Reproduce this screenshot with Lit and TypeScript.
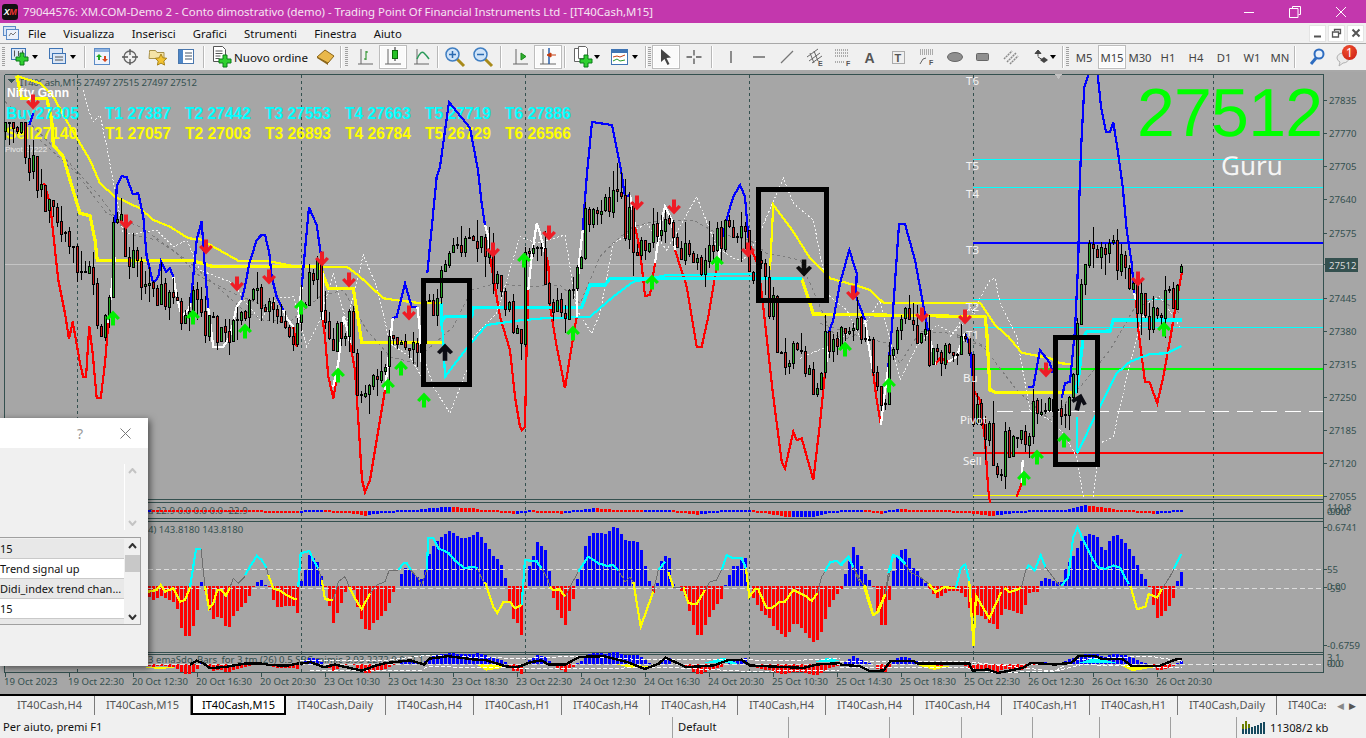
import { LitElement, html, css, svg } from "lit";
import { customElement } from "lit/decorators.js";

type N = number[];
const Z = (ox: number, oy: number, s: number, a: N) => {
  const out: string[] = [];
  for (let i = 0; i < a.length; i += 2) out.push(`${(ox + a[i] / s).toFixed(1)},${(oy + a[i + 1] / s).toFixed(1)}`);
  return out.join(" ");
};
const z9 = (a: N) => Z(0, 70, 3, a);
const z8 = (a: N) => Z(400, 170, 3, a);
const z7 = (a: N) => Z(950, 230, 3, a);
const z12 = (a: N) => Z(740, 290, 3, a);
const z3 = (a: N) => Z(906, 0, 3, a);
const z10 = (a: N) => Z(140, 500, 3, a);
const z11 = (a: N) => Z(520, 500, 3, a);
const z6 = (a: N) => Z(840, 490, 2.98, a);
const z5 = (a: N) => Z(300, 650, 2.9, a);
const r = (a: N) => Z(0, 0, 1, a);

const BLUE = [
  z9([88, 165, 100, 130]),
  z9([346, 460, 350, 350, 365, 318, 380, 322, 398, 372, 415, 370, 430, 440, 440, 560, 460, 640, 475, 620, 483, 575, 498, 605, 510, 595, 520, 620]),
  z9([572, 700, 590, 510, 605, 452, 612, 560, 625, 715]),
  z9([725, 690, 735, 650, 748, 580, 770, 510, 785, 494, 795, 494, 808, 550, 815, 620, 830, 680, 850, 720]),
  z9([905, 650, 915, 540, 927, 412, 950, 465, 962, 550]),
  z9([1178, 745, 1190, 740, 1215, 640, 1235, 710, 1252, 710]),
  z9([1282, 610, 1310, 320, 1320, 290]) + " " + r([449, 102, 470, 128, 478, 170]) + " " + z8([245, 100, 255, 165]),
  z8([548, 180, 560, 20]) + " " + r([592, 122, 612, 125, 621, 170]) + " " + z8([675, 80, 690, 75]),
  z8([965, 210, 985, 130, 1000, 80, 1020, 45, 1035, 80, 1045, 200, 1050, 225]),
  z8([1285, 490, 1300, 450, 1320, 340, 1348, 240, 1370, 310]) + " " + z12([348, 20, 375, 90]),
  z12([445, 230, 455, 120]) + " " + r([899, 224, 905, 224, 915, 260, 928, 331]),
  z12([675, 130, 690, 170, 700, 300]),
  z7([235, 470, 250, 470, 270, 360, 300, 400, 308, 430]),
  z7([335, 505, 345, 460, 360, 455, 375, 300, 385, 90]) + " " + z3([520, 600, 525, 450, 535, 260, 547, 225]),
  z3([575, 225, 585, 320, 600, 397, 612, 397, 622, 367, 635, 450, 650, 560]) + " " + z7([530, 0, 545, 100, 553, 190]),
];
const WHITE = [
  z9([325, 760, 335, 650, 345, 560]),
  z9([520, 620, 530, 680, 545, 740, 565, 720, 572, 700]),
  z9([625, 715, 640, 830, 670, 830, 690, 800, 710, 710, 725, 690]),
  z9([850, 720, 860, 745, 880, 770]),
  z9([892, 770, 905, 650]),
  z9([962, 550, 968, 620, 968, 750]),
  z9([1000, 950, 1015, 880, 1030, 740, 1040, 770, 1050, 820]),
  z9([1155, 960, 1165, 870, 1178, 745]),
  z9([1252, 710, 1258, 760, 1265, 880]),
  z8([255, 165, 265, 200, 270, 260]),
  z8([385, 360, 395, 260, 410, 160, 420, 190, 435, 250]),
  z8([530, 440, 530, 380, 540, 250, 548, 180]),
  z8([690, 75, 695, 100, 705, 170]),
  z8([765, 280, 780, 170, 795, 110, 815, 150, 825, 240]),
  z8([950, 290, 965, 210]),
  z12([255, 250, 265, 170]),
  z12([375, 90, 385, 160, 400, 250]),
  z12([423, 405, 430, 340, 445, 230]),
  z12([565, 125, 575, 170, 585, 225]),
  z12([625, 215, 650, 200, 675, 130]),
  z7([215, 760, 218, 690]),
  z7([553, 190, 558, 210]),
];
const RED = [
  z9([132, 340, 150, 400, 165, 540, 175, 630, 195, 730, 207, 808, 218, 755, 240, 880, 250, 922, 258, 922, 268, 768, 278, 850, 290, 985, 302, 985, 315, 880, 325, 760]),
  z9([880, 770, 890, 830]),
  z9([968, 750, 975, 800, 985, 920, 1000, 985, 1015, 900]),
  z9([1050, 820, 1065, 900, 1075, 1050]) + " " + r([362, 480, 365, 492, 370, 480, 380, 420]) + " " + z9([1155, 960]),
  z8([270, 260, 280, 320, 300, 440, 330, 540, 345, 680, 360, 770, 365, 780, 375, 770, 380, 520, 385, 360]),
  z8([435, 250, 445, 280, 450, 410, 470, 530, 495, 655, 510, 560, 530, 440]),
  z8([705, 170, 720, 240, 735, 378, 750, 375, 765, 280]),
  z8([825, 240, 860, 350, 890, 530, 905, 530, 925, 440, 950, 290]),
  z8([1050, 225, 1075, 290]) + " " + z12([70, 50, 100, 320, 125, 515, 135, 535, 160, 425, 170, 450, 185, 445, 220, 570, 240, 400, 255, 250]),
  z12([400, 250, 410, 330, 423, 405]),
  z12([585, 225, 600, 205, 615, 210, 625, 215]),
  z12([700, 300, 720, 330, 735, 450, 745, 600, 750, 640]),
  z7([200, 800, 215, 760]),
  z7([558, 210, 565, 300, 585, 455, 598, 455, 622, 520, 640, 440, 660, 330, 680, 210, 695, 130]),
];
const YTHIN = [
  z9([50, 18, 120, 40, 160, 80, 210, 170, 270, 270, 300, 340, 345, 380, 420, 415, 460, 450, 510, 470, 565, 505, 600, 508, 640, 530, 715, 572, 800, 572, 880, 588, 960, 590, 1040, 590, 1080, 620, 1150, 685, 1200, 692]) + " " + z8([65, 400, 125, 400]),
  z8([1110, 300, 1120, 105, 1180, 185, 1230, 265, 1290, 325, 1380, 350]) + " " + z12([390, 0, 430, 38, 720, 38]) + " " + z7([135, 285, 175, 320, 215, 368, 300, 385, 330, 400, 365, 402]),
];
const YTHICK = [
  z9([50, 18, 65, 85, 140, 85, 155, 150, 160, 225, 190, 260, 210, 330, 240, 430, 270, 437, 285, 510, 292, 572, 580, 572, 640, 590, 960, 590, 985, 655, 1060, 655, 1085, 817, 1200, 817]) + " " + z8([125, 517]),
  z8([1205, 325, 1225, 385, 1240, 432]) + " " + z12([420, 75, 735, 80]) + " " + z7([110, 300, 120, 480, 135, 487, 365, 487]),
];
const CTHICK = [
  z8([125, 400, 125, 455, 135, 440, 215, 440, 220, 412, 545, 412, 570, 345, 615, 345, 630, 325, 1205, 325]),
  z7([375, 490, 385, 450, 400, 320, 410, 305, 480, 303, 490, 270, 695, 270]),
];
const CTHIN = [
  z8([125, 455, 130, 510, 135, 620, 200, 535, 260, 465, 350, 452, 430, 445, 570, 440, 640, 380, 700, 335, 800, 315, 1070, 312]),
  z7([380, 560, 382, 670, 430, 570, 500, 430, 540, 395, 600, 372, 650, 370, 695, 348]),
];
const WDOT = [
  z9([250, 60, 265, 120, 280, 155, 300, 135, 320, 230, 335, 310, 370, 490, 410, 490, 470, 480, 520, 530, 560, 510, 600, 600, 650, 620, 700, 640, 740, 700, 780, 750, 830, 685, 880, 680, 920, 830, 960, 750, 1000, 610, 1040, 760, 1090, 555, 1130, 650, 1170, 820, 1230, 860, 1270, 930]),
  z8([75, 570, 100, 650, 150, 730, 200, 600, 220, 500, 290, 430, 360, 200, 410, 220, 495, 195, 530, 420, 575, 490, 600, 430, 640, 220, 740, 160, 800, 240, 890, 80, 950, 230, 1000, 265, 1030, 270, 1070, 210, 1150, 25, 1180, 100, 1240, 150, 1270, 300, 1290, 380, 1340, 420, 1380, 500]),
  z12([180, 205, 260, 170, 340, 120, 380, 95, 420, 30, 480, 270, 530, 170, 590, 105, 640, 130, 690, 50, 710, 80, 740, 90]),
  z7([0, 320, 60, 260, 120, 150, 135, 145, 150, 220, 200, 320, 240, 540, 300, 570, 340, 610, 380, 680, 400, 800]),
  z7([430, 800, 450, 640, 490, 620, 540, 400, 590, 220, 630, 200, 690, 290]),
];
const GDASH = [
  z9([15, 95, 100, 170, 200, 270, 300, 380, 380, 490, 470, 510, 560, 570, 640, 640, 730, 720, 790, 750, 870, 755, 960, 680, 1030, 660, 1100, 780, 1170, 860, 1250, 880]),
  z9([120, 210, 230, 310, 320, 430, 420, 470, 520, 540, 600, 620, 700, 670, 800, 710]),
  z8([75, 545, 160, 470, 215, 360, 290, 340, 380, 350, 480, 345, 540, 400, 600, 260, 650, 210, 700, 170, 760, 155, 820, 150, 880, 150, 950, 190, 1050, 210, 1100, 250, 1200, 270, 1290, 480, 1330, 510, 1380, 490]),
  z12([240, 100, 330, 130, 440, 160, 480, 220, 540, 125, 640, 130, 740, 170]),
  z7([20, 320, 100, 350, 200, 480, 300, 570, 400, 460, 480, 360, 550, 240, 620, 200, 690, 250]),
];

const RD: N[] = [[33, 102], [126, 222], [206, 247], [237, 284], [269, 277], [322, 259], [349, 280], [409, 313], [493, 250], [549, 233], [637, 203], [674, 207], [748, 250], [853, 293], [922, 315], [965, 317], [1046, 370], [1138, 279]];
const GU: N[] = [[113, 318], [193, 317], [245, 331], [301, 307], [338, 375], [388, 386], [401, 368], [424, 400], [524, 260], [573, 333], [652, 282], [717, 263], [845, 349], [889, 385], [1024, 478], [1037, 457], [1064, 440], [1164, 329]];

const PRICE: N = [5, 130, 20, 135, 28, 165, 38, 175, 48, 195, 55, 225, 65, 238, 75, 260, 85, 265, 95, 290, 100, 330, 108, 290, 115, 215, 118, 200, 127, 260, 135, 268, 145, 290, 155, 300, 163, 290, 180, 318, 193, 297, 207, 320, 217, 333, 230, 330, 240, 317, 257, 297, 277, 320, 293, 330, 302, 303, 310, 260, 320, 287, 328, 360, 340, 323, 350, 330, 358, 400, 370, 387, 390, 337, 417, 347, 430, 303, 445, 250, 477, 233, 497, 280, 522, 330, 525, 237, 542, 257, 550, 303, 565, 323, 577, 263, 587, 207, 613, 200, 627, 223, 640, 250, 653, 233, 667, 203, 673, 237, 690, 270, 705, 263, 723, 230, 745, 220, 750, 270, 762, 257, 767, 293, 783, 357, 797, 353, 813, 393, 827, 347, 843, 330, 853, 323, 870, 363, 883, 397, 890, 340, 903, 307, 920, 337, 937, 360, 967, 343, 973, 403, 990, 440, 997, 473, 1010, 437, 1027, 430, 1037, 407, 1050, 407, 1065, 410, 1073, 390, 1082, 290, 1087, 257, 1113, 250, 1125, 273, 1138, 303, 1150, 317, 1162, 317, 1167, 300, 1180, 273];

const HIST: N = [148, -10, 152, -15, 160, -10, 168, -13, 176, -18, 180, -39, 184, -50, 189, -50, 193, -40, 197, -24, 201, 4, 205, -5, 209, -24, 213, -33, 220, -30, 224, -40, 229, -41, 233, -30, 240, -22, 247, -15, 252, -2, 257, 4, 262, 6, 265, 1, 270, -1, 273, -14, 277, -21, 287, -20, 293, -20, 297, -27, 299, 5, 303, 5, 308, 32, 317, 24, 322, 6, 325, -1, 330, -25, 333, -37, 338, -25, 342, -14, 347, -1, 353, -4, 358, -25, 364, -41, 367, -48, 372, -38, 378, -33, 385, -25, 390, -15, 393, -6, 397, 0, 400, 10, 405, 18, 412, 14, 418, 8, 423, 6, 428, 30, 433, 40, 438, 46, 445, 52, 450, 56, 457, 50, 462, 48, 468, 48, 477, 54, 482, 48, 487, 40, 493, 30, 500, 24, 505, 8, 508, -12, 513, -33, 518, -38, 522, -53, 525, -2, 529, 20, 533, 30, 537, 44, 541, 40, 545, 36, 549, 15, 553, -12, 557, -24, 562, -34, 565, -39, 569, -25, 573, -13, 577, 7, 582, 18, 585, 40, 589, 50, 593, 53, 600, 53, 605, 52, 609, 55, 613, 59, 619, 57, 622, 50, 625, 46, 632, 45, 637, 44, 642, 34, 645, 20, 649, 5, 653, -7, 657, 3, 661, 25, 665, 30, 669, 28, 673, 2, 677, 0, 682, -6, 686, -12, 690, -29, 694, -43, 698, -51, 702, -48, 706, -36, 710, -29, 717, -18, 721, -13, 725, 1, 729, 11, 733, 20, 737, 20, 742, 27, 746, 28, 750, -10, 753, -12, 758, -21, 762, -26, 765, -29, 770, -33, 773, -40, 778, -45, 783, -50, 787, -52, 792, -38, 798, -38, 802, -43, 807, -49, 810, -53, 813, -56, 818, -54, 822, -44, 826, -29, 830, -19, 834, -13, 838, -7, 842, -2, 845, 12, 849, 25, 853, 39, 857, 31, 861, 20, 865, 12, 869, 6, 873, -1, 877, -27, 881, -39, 885, -39, 889, -14, 893, 15, 897, 30, 901, 36, 905, 37, 909, 28, 913, 18, 917, 15, 921, 8, 925, 3, 929, -3, 933, -8, 937, -12, 941, -10, 947, -5, 957, -5, 964, -8, 968, -19, 972, -30, 977, -29, 983, -30, 988, -37, 993, -38, 997, -43, 1001, -29, 1005, -23, 1010, -24, 1017, -27, 1022, -28, 1025, -19, 1028, -7, 1037, -6, 1040, 4, 1044, 8, 1048, 7, 1057, 4, 1061, 4, 1063, 13, 1068, 22, 1072, 29, 1075, 33, 1079, 42, 1083, 48, 1087, 52, 1092, 52, 1097, 49, 1102, 37, 1106, 36, 1110, 48, 1116, 52, 1120, 48, 1125, 43, 1130, 35, 1135, 26, 1139, 16, 1143, 7, 1147, 7, 1152, -13, 1155, -30, 1159, -34, 1163, -27, 1167, -23, 1172, -15, 1175, -5, 1179, 14];
const OSC: N = [148, 1, 300, -1, 310, 1, 320, 2, 335, -1, 355, -3, 365, -5, 375, -3, 400, 0, 430, 4, 450, 5, 470, 4, 490, 1, 515, -3, 530, 0, 563, -3, 580, 2, 593, 4, 615, 2, 640, 0, 670, 0, 697, -4, 720, 0, 750, 0, 787, -6, 813, -6, 840, 0, 862, 2, 883, -3, 897, 3, 930, 1, 960, -1, 993, -5, 1030, 0, 1060, 0, 1083, 7, 1100, 5, 1130, 0, 1155, -3, 1179, 1];

const interp = (a: N, x: number) => {
  if (x <= a[0]) return a[1];
  for (let i = 2; i < a.length; i += 2) {
    if (x <= a[i]) {
      const t = (x - a[i - 2]) / (a[i] - a[i - 2]);
      return a[i - 1] + t * (a[i + 1] - a[i - 1]);
    }
  }
  return a[a.length - 1];
};

let seed = 20231026;
const rnd = () => {
  seed = (seed + 0x6d2b79f5) | 0;
  let t = Math.imul(seed ^ (seed >>> 15), 1 | seed);
  t = (t + Math.imul(t ^ (t >>> 7), 61 | t)) ^ t;
  return ((t ^ (t >>> 14)) >>> 0) / 4294967296;
};

type Candle = { x: number; o: number; c: number; h: number; l: number };
const CANDLES: Candle[] = [];
{
  let prev = 132;
  for (let x = 5; x <= 1181; x += 4) {
    const slope = Math.abs(interp(PRICE, x + 8) - interp(PRICE, x - 8));
    const amp = 20 + Math.min(26, slope * 0.7);
    const c = Math.round(interp(PRICE, x) + (rnd() - 0.5) * amp);
    const o = Math.round(prev + (rnd() - 0.5) * 3);
    let h = Math.min(o, c) - Math.round(rnd() * rnd() * 26);
    const l = Math.max(o, c) + Math.round(rnd() * rnd() * 26);
    if (x < 82) h = Math.max(h, 122);
    CANDLES.push({ x, o: Math.max(o, x < 82 ? 122 : 0), c: Math.max(c, x < 82 ? 122 : 0), h, l });
    prev = c;
  }
  const last = CANDLES[CANDLES.length - 1];
  last.o = 272; last.c = 266; last.h = 264; last.l = 273;
}

const TIMES = ["19 Oct 2023", "19 Oct 22:30", "20 Oct 12:30", "20 Oct 16:30", "20 Oct 20:30", "23 Oct 10:30", "23 Oct 14:30", "23 Oct 18:30", "23 Oct 22:30", "24 Oct 12:30", "24 Oct 16:30", "24 Oct 20:30", "25 Oct 10:30", "25 Oct 14:30", "25 Oct 18:30", "25 Oct 22:30", "26 Oct 12:30", "26 Oct 16:30", "26 Oct 20:30"];
const PRICES: [string, number][] = [["27835", 100], ["27770", 133], ["27705", 166], ["27640", 199], ["27575", 233], ["27445", 298], ["27380", 331], ["27315", 364], ["27250", 397], ["27185", 430], ["27120", 463], ["27055", 496]];
const GRID = [77, 301, 525, 749, 973, 1213];
const ARROW = "0,-7.5 7,0 4.5,2 2,-.5 2,7.5 -2,7.5 -2,-.5 -4.5,2 -7,0";
const poly = (pts: string[], cls: string) => pts.map((p) => svg`<polyline class=${cls} points=${p}></polyline>`);

/* ---- icons ---- */
const plus = (cx: number, cy: number) => svg`<path d="M${cx - 2} ${cy - 6}h4v4h4v4h-4v4h-4v-4h-4v-4h4z" fill="#2fd02f" stroke="#0a7a1a"/>`;
const IC: Record<string, unknown> = {
  newChart: html`<svg width="24" height="20"><rect x="1.500" y="1.500" width="14" height="11" fill="#dbe6f5" stroke="#3f74b4"/><path d="M4.500 3.500v6M8.500 4v5M12.500 3.500v4" stroke="#555"/>${plus(12, 12)}</svg>`,
  profile: html`<svg width="24" height="20"><rect x="1.500" y="1.500" width="13" height="10" fill="#dbe6f5" stroke="#3f74b4"/><rect x="4.500" y="6.500" width="13" height="10" fill="#dbe6f5" stroke="#3f74b4"/><path d="M7 10h8M7 13h8" stroke="#555"/></svg>`,
  market: html`<svg width="20" height="20"><rect x="2.500" y="1.500" width="15" height="16" fill="#eef3fb" stroke="#5b8bc7"/><rect x="3" y="2" width="14" height="3" fill="#8fb2df"/><path d="M7 7l3 3H8v3H6v-3H4z" fill="#1fa81f"/><path d="M13 15l-3-3h2V9h2v3h2z" fill="#d8431a"/></svg>`,
  target: html`<svg width="20" height="20"><circle cx="10" cy="10" r="6" fill="none" stroke="#666" stroke-width="1.300"/><path d="M10 2v6M10 12v6M2 10h6M12 10h6" stroke="#555" stroke-width="1.300"/></svg>`,
  folder: html`<svg width="20" height="20"><path d="M1.500 5.500V3.500h6l1.500 2h7v6h-15z" fill="#f5e3a6" stroke="#a8924a"/><path d="M13 7l1.800 3.800 4 .5-3 2.800.8 4-3.600-2-3.600 2 .8-4-3-2.800 4-.5z" fill="#f2c230" stroke="#a9851d"/></svg>`,
  nav: html`<svg width="18" height="18"><rect x="1.500" y="1.500" width="15" height="14" fill="#fff" stroke="#4a77ad"/><rect x="2" y="2" width="4" height="13" fill="#4c86c8"/><path d="M8 5h7M8 8h7M8 11h7" stroke="#456"/></svg>`,
  order: html`<svg width="24" height="24"><path d="M3.500 1.500h9l3 3v12h-12z" fill="#fff" stroke="#555"/><path d="M5.500 6h7M5.500 8.500h7M5.500 11h5M5.500 13.500h4" stroke="#555"/>${plus(15, 16)}</svg>`,
  gold: html`<svg width="20" height="18"><path d="M1 9L9 2l9 6-6 7z" fill="#e9b84a" stroke="#8a6418"/><path d="M1 9l11 6v2L1 10z" fill="#8a6418"/></svg>`,
  bars: html`<svg width="20" height="20"><path d="M3 17H18M6 2v15" stroke="#666"/><path d="M11 4v9M11 5h2M9 12h2" stroke="#1a8a1a"/></svg>`,
  candle: html`<svg width="20" height="22"><path d="M2 18H18M5 3v15" stroke="#666"/><path d="M12 1v14" stroke="#222"/><rect x="9.500" y="4.500" width="5" height="8" fill="#27c227" stroke="#0c6d0c"/></svg>`,
  line: html`<svg width="20" height="20"><path d="M3 17H18M6 2v15" stroke="#666"/><path d="M6 12Q10 3 13 6t5 6" fill="none" stroke="#2b9a5a" stroke-width="1.500"/></svg>`,
  zin: html`<svg width="22" height="22"><path d="M13 13l7 7" stroke="#a88a1a" stroke-width="3"/><circle cx="8.500" cy="8.500" r="6.500" fill="#cfe3f8" stroke="#3f7ec2" stroke-width="1.500"/><path d="M5 8.500h7M8.500 5v7" stroke="#2a6ab0" stroke-width="1.500"/></svg>`,
  zout: html`<svg width="22" height="22"><path d="M13 13l7 7" stroke="#a88a1a" stroke-width="3"/><circle cx="8.500" cy="8.500" r="6.500" fill="#cfe3f8" stroke="#3f7ec2" stroke-width="1.500"/><path d="M5 8.500h7" stroke="#2a6ab0" stroke-width="1.500"/></svg>`,
  scroll: html`<svg width="20" height="20"><path d="M3 17H18M6 2v15" stroke="#666"/><path d="M11 6v7l5-3.500z" fill="#2fb02f" stroke="#1a8a1a"/></svg>`,
  shift: html`<svg width="20" height="22"><path d="M2 18H18M5 3v15" stroke="#666"/><path d="M11 2v16" stroke="#2a5ea8" stroke-width="1.500"/><path d="M18 9l-5 0M13 7v4l-4-2z" stroke="#c43d0f" fill="#c43d0f"/></svg>`,
  tmpl: html`<svg width="24" height="24"><path d="M2.500 3.500h9l2 2v11h-11z" fill="#fff" stroke="#666"/><path d="M6.500 1.500h7l2 2v10h-9z" fill="#fff" stroke="#666"/>${plus(14, 16)}</svg>`,
  indi: html`<svg width="24" height="20"><rect x="1.500" y="2.500" width="16" height="15" fill="#fff" stroke="#3f74b4"/><rect x="2" y="3" width="15" height="3" fill="#3f74b4"/><path d="M3 10l4-1 3 1 5-2" fill="none" stroke="#c4421a"/><path d="M3 14l4-2 3 2 5-1" fill="none" stroke="#2a9a2a"/></svg>`,
  cursor: html`<svg width="16" height="20"><path d="M3 2l0 13 3.500-3 3 6 2-1-3-6 4.500-.5z" fill="#444"/></svg>`,
  cross: html`<svg width="18" height="18"><path d="M9 2v5.500M9 10.500V16M1.500 9H7M11 9h5.500" stroke="#555" stroke-width="1.300"/></svg>`,
  vline: html`<svg width="14" height="16"><path d="M7 2v12" stroke="#555" stroke-width="1.300"/></svg>`,
  hline: html`<svg width="16" height="14"><path d="M2 7h12" stroke="#555" stroke-width="1.300"/></svg>`,
  tline: html`<svg width="16" height="16"><path d="M2 14L14 2" stroke="#777" stroke-width="1.300"/></svg>`,
  chan: html`<svg width="18" height="18"><path d="M1 9L12 1M3 13L14 5M6 15L16 8M4 5l4 10M8 3l4 10" stroke="#666" fill="none"/><text x="12" y="18" font-size="7" font-weight="700" font-family="Liberation Sans" fill="#555">E</text></svg>`,
  fib: html`<svg width="18" height="18"><path d="M1 2h14M1 5h14M1 8h14M1 14h9" stroke="#666" stroke-dasharray="1 1"/><text x="12" y="18" font-size="7" font-weight="700" font-family="Liberation Sans" fill="#555">F</text></svg>`,
  txt: html`<svg width="16" height="18"><text x="1.500" y="15" font-size="14" font-weight="700" font-family="Liberation Sans" fill="#555">A</text></svg>`,
  label: html`<svg width="18" height="18"><rect x="2.500" y="3.500" width="12" height="12" fill="none" stroke="#666" stroke-dasharray="1 1"/><text x="4.500" y="14" font-size="11" font-weight="700" font-family="Liberation Sans" fill="#555">T</text></svg>`,
  fan: html`<svg width="18" height="18"><path d="M2 2h14M2 4h14M2 6h14" stroke="#666" stroke-dasharray="1 1"/><path d="M2 16l3-5 3-1" fill="none" stroke="#666"/><text x="11" y="17" font-size="7" font-weight="700" font-family="Liberation Sans" fill="#555">F</text></svg>`,
  ell: html`<svg width="18" height="12"><ellipse cx="9" cy="6" rx="7.500" ry="4.500" fill="#8f8f8f" stroke="#666"/></svg>`,
  rect: html`<svg width="16" height="12"><rect x="1.500" y="2.500" width="12" height="7" rx="1" fill="#8f8f8f" stroke="#666"/></svg>`,
  hatch: html`<svg width="16" height="16"><path d="M1 10L9 2M4 13l9-9M7 15l8-8" stroke="#8a8a8a" stroke-width="1.500" stroke-dasharray="2 .7"/></svg>`,
  arrows: html`<svg width="24" height="16"><g transform="translate(5 0)"><path d="M5 1l3 3.500H2zM5 4.500v3" fill="#444" stroke="#444"/><path d="M5 8l5 3" stroke="#444"/><path d="M11 8l4 3-4 3-4-3z" fill="#444"/></g></svg>`,
  search: html`<svg width="18" height="20"><circle cx="11" cy="7" r="4.500" fill="#e7f0fb" stroke="#2d6cc0" stroke-width="2"/><path d="M8 11l-5 6" stroke="#2d6cc0" stroke-width="3"/></svg>`,
};

@customElement("app-root")
export class AppRoot extends LitElement {
  static styles = css`
    :host { display: flex; flex-direction: column; width: 1366px; height: 738px; overflow: hidden; background: #f0f0f0; font-family: "Noto Sans", "Liberation Sans", sans-serif; font-size: 11.3px; color: #111; }
    .title { flex: none; height: 23px; padding-right: 2px; box-sizing: border-box; background: #c337ad; color: #f6e4f2; display: flex; align-items: center; font-size: 11.38px; }
    .logo { flex: none; width: 16px; height: 16px; margin: 0 5px 0 2px; background: #111; border-radius: 3px; color: #fff; font: italic 700 9px "Liberation Sans", sans-serif; display: flex; align-items: center; justify-content: center; letter-spacing: -0.5px; }
    .logo b { color: #e33; font-weight: 700; }
    .ttext { flex: 1; white-space: nowrap; }
    .wbtn { flex: none; width: 46px; height: 23px; display: flex; align-items: center; justify-content: center; }
    .menu { flex: none; height: 20px; display: flex; align-items: center; }
    .micon { flex: none; width: 19.4px; height: 20px; display: flex; align-items: center; justify-content: center; padding-left: 3px; box-sizing: border-box; }
    .mi { padding: 0 8.6px; white-space: nowrap; }
    .grow { flex: 1; }
    .mdi { flex: none; width: 17px; height: 17px; margin-right: 2px; background: #fff; border: 1px solid #e4e4e4; box-sizing: border-box; display: flex; align-items: center; justify-content: center; }
    .toolbar { flex: none; height: 26px; border-top: 1px solid #a8a8a8; border-bottom: 2px solid #a8a8a8; display: flex; align-items: center; background: #f0f0f0; }
    .b { flex: none; width: 28px; height: 24px; display: flex; align-items: center; justify-content: center; box-sizing: border-box; position: relative; }
    .b.active { border: 1px solid #bdbdbd; background: #fafafa; outline: 1px solid #fff; outline-offset: -2px; }
    .bd { flex: none; width: 38px; height: 24px; display: flex; align-items: center; padding-left: 3px; box-sizing: border-box; gap: 0; }
    .bd .car { margin-left: -2px; }
    .bd.n37 { width: 37px; }
    .car { width: 0; height: 0; border: 3.5px solid transparent; border-top: 4px solid #000; border-bottom: 0; }
    .sep { flex: none; width: 2px; height: 22px; background: #b8b8b8; border-right: 1px solid #fff; box-sizing: border-box; }
    .grip { flex: none; width: 3px; height: 20px; background: repeating-linear-gradient(#a0a0a0 0 1px, transparent 1px 2px); }
    .ga { margin-left: 3px; margin-right: 3px; }
    .gb { margin-left: 1px; margin-right: 1px; }
    .gc { margin-left: 2px; margin-right: 1px; }
    .order { flex: none; width: 104px; height: 24px; display: flex; align-items: center; white-space: nowrap; padding-left: 2px; box-sizing: border-box; font-size: 11.6px; }
    .tf { color: #444; font-size: 11.3px; }
    .m1 { margin-left: 1px; } .m2 { margin-left: 2px; } .m3 { margin-left: 3px; } .m4 { margin-left: 4px; } .m7 { margin-left: 7px; }
    .badge { position: absolute; left: 11px; top: 0; width: 15px; height: 15px; border-radius: 50%; background: radial-gradient(circle at 40% 30%, #f05030, #c81a10); color: #fff; font-size: 12px; line-height: 15px; text-align: center; }
    .chart { flex: none; height: 622px; position: relative; background: #a6a6a6; overflow: hidden; }
    .chart svg.c { display: block; }
    .cl { fill: none; shape-rendering: crispEdges; }
    .blue { stroke: #0000ff; stroke-width: 2.2; } .white { stroke: #fff; stroke-width: 2.2; } .red { stroke: #ff0000; stroke-width: 2.2; }
    .yth { stroke: #ffff00; stroke-width: 2.2; } .ytk { stroke: #ffff00; stroke-width: 3.2; }
    .cth { stroke: #00ffff; stroke-width: 2.2; } .ctk { stroke: #00ffff; stroke-width: 3.2; }
    .wdot { stroke: #f2f2f2; stroke-width: 1; stroke-dasharray: 2 2; }
    .gdash { stroke: #7c7c7c; stroke-width: 1; stroke-dasharray: 3 3; }
    .ax { font: 9.6px "Noto Sans", "Liberation Sans", sans-serif; fill: #34504f; }
    .axl { fill: #d8d8d8; }
    .lvl { font: 11.5px "Noto Sans", sans-serif; fill: #f4f4f4; }
    .hd { font: 700 15.6px "Liberation Sans", sans-serif; }
    .dialog { position: absolute; left: 0; top: 346px; width: 148px; height: 248px; background: #f0f0f0; box-shadow: 2px 2px 7px rgba(0,0,0,.55); display: flex; flex-direction: column; }
    .dtitle { flex: none; height: 30px; background: #fff; display: flex; align-items: center; justify-content: flex-end; color: #999; font-size: 14px; }
    .dq { margin-right: 37px; }
    .dx { margin-right: 17px; display: flex; }
    .dscroll { flex: none; height: 66px; margin: 16px 0 0 124px; width: 16px; border-left: 1px solid #fff; display: flex; flex-direction: column; justify-content: space-between; align-items: center; padding: 4px 0 4px; box-sizing: border-box; }
    .tbl { flex: none; margin-top: 7px; width: 141px; height: 88px; box-sizing: border-box; border: 1px solid #a0a0a0; border-left: 0; padding: 1px 0 0; display: flex; background: #f0f0f0; }
    .rows { flex: 1; min-width: 0; overflow: hidden; }
    .row { height: 20px; box-sizing: border-box; border-bottom: 1px solid #c9c9c9; white-space: nowrap; overflow: hidden; text-overflow: ellipsis; line-height: 19px; background: #fff; font-size: 11px; }
    .row.g { background: #e8e8e8; }
    .vsb { flex: none; width: 16px; display: flex; flex-direction: column; align-items: center; justify-content: space-between; position: relative; padding: 4px 0; box-sizing: border-box; }
    .thumb { position: absolute; left: 1px; top: 16px; width: 15px; height: 17px; background: #c8c8c8; }
    .tabs { flex: none; height: 21px; border-top: 2px solid #000; display: flex; background: #f0f0f0; color: #555; font-size: 11px; }
    .strip { flex: 1; display: flex; overflow: hidden; padding-left: 6px; }
    .tab { flex: none; height: 19px; line-height: 18px; box-sizing: border-box; width: 88px; padding-left: 11px; white-space: nowrap; }
    .tab.sp { border-right: 1px solid #7a7a7a; }
    .tab.w89 { width: 89px; } .tab.w96 { width: 96px; } .tab.w100 { width: 100px; } .tab.w99 { width: 99px; }
    .tab.act { background: #fff; color: #000; width: 95px; border: 2px solid #000; border-top: 0; padding-left: 9px; }
    .tarrow { flex: none; width: 40px; display: flex; align-items: center; justify-content: flex-end; gap: 5px; padding-right: 10px; box-sizing: border-box; height: 19px; font-size: 9px; }
    .tarrow .off { color: #888; }
    .status { flex: 1; display: flex; align-items: center; font-size: 11.2px; }
    .st { height: 21px; box-sizing: border-box; border-right: 1px solid #a0a0a0; padding-left: 5px; line-height: 20px; white-space: nowrap; flex: none; }
    .kb { display: flex; align-items: center; gap: 4px; padding-left: 5px; white-space: nowrap; }
    .s1 { width: 673px; padding-left: 3px; } .s2 { width: 116px; } .s3 { width: 101px; } .s4 { width: 72px; } .s5 { width: 71px; } .s6 { width: 67px; } .s7 { width: 71px; } .s8 { width: 66px; }
  `;

  private chart() {
    const bars = [];
    const osc = [];
    const low = [];
    let prevO = 0;
    for (let x = 149; x <= 1181; x += 4) {
      const v = Math.round(interp(HIST, x));
      if (v !== 0) bars.push(svg`<rect x=${x - 1} y=${v > 0 ? 586 - v : 586} width="3" height=${Math.abs(v)} fill=${v > 0 ? "#0000ff" : "#ff0000"}></rect>`);
      const o = interp(OSC, x);
      const ov = Math.round(o);
      const h = Math.max(2, Math.abs(ov));
      osc.push(svg`<rect x=${x - 1} y=${ov >= 0 ? 512 - h : 511} width="3" height=${h} fill=${o >= prevO ? "#0000ff" : "#ff0000"}></rect>`);
      prevO = o;
      const lv = Math.round(v / 5);
      if (lv !== 0) low.push(svg`<rect x=${x - 1} y=${lv > 0 ? 664 - lv : 664} width="3" height=${Math.abs(lv)} fill=${lv > 0 ? "#0000ff" : "#ff0000"}></rect>`);
    }
    const candles = CANDLES.map((k) => {
      const top = Math.min(k.o, k.c);
      const h = Math.max(1, Math.abs(k.o - k.c));
      const col = k.c < k.o ? "#23a523" : "#cc1818";
      return svg`<rect x=${k.x} y=${k.h} width="1" height=${k.l - k.h} fill="#000"></rect><rect x=${k.x - 1} y=${top} width="3" height=${h + 1} fill="#000"></rect>${h > 1 ? svg`<rect x=${k.x} y=${top + 1} width="1" height=${h - 1} fill=${col}></rect>` : ""}`;
    });
    return html`<svg class="c" width="1366" height="622" viewBox="0 72 1366 622" shape-rendering="crispEdges">
      <path fill="none" stroke="#34504f" d="M4.500 74.500H1323.500M4.500 74.500V672.500M1323.500 74.500V672.500M4 499.500H1324M4 502.500H1324M4 518.500H1324M4 521.500H1324M4 652.500H1324M4 654.500H1324M4 672.500H1324"></path>
      ${GRID.map((x) => svg`<path stroke="#34504f" stroke-dasharray="3 3" d="M${x + 0.5} 75V672"></path>`)}
      ${[...PRICES.map((p) => p[1]), 264, 527, 569, 587, 645].map((y) => svg`<path stroke="#34504f" d="M1323 ${y + 0.5}H1327"></path>`)}
      ${TIMES.map((_, i) => svg`<path stroke="#34504f" d="M${5.500 + 64 * i} 672V677"></path>`)}

      <path stroke="#c4c4c4" d="M5 264.500H1323"></path>
      <path stroke="#00ffff" d="M973 159.500H1323M973 187.500H1323M973 299.500H1323M973 327.500H1323"></path>
      <path stroke="#ffff00" d="M973 495.500H1323"></path>
      <rect x="973" y="242" width="350" height="2" fill="#0000ff"></rect>
      <rect x="973" y="368" width="350" height="2" fill="#00ff00"></rect>
      <rect x="973" y="452" width="350" height="2" fill="#ff0000"></rect>
      <path stroke="#fff" stroke-dasharray="16 8" d="M997 411.500H1323"></path>

      <text class="ax" x="20" y="86" textLength="177">IT40Cash,M15  27497 27515 27497 27512</text>
      <path d="M8 79h7l-3.500 4z" fill="#34504f"></path>
      <path d="M1055 74h7l-3.500 5z" fill="#c0c0c0"></path>

      <text x="1137" y="136" font-family="Liberation Sans" font-size="68" fill="#00ff00" textLength="186" text-rendering="geometricPrecision">27512</text>
      <text x="1221" y="175" font-family="Noto Sans" font-size="26" fill="#f5f5f5" text-rendering="geometricPrecision">Guru</text>

      ${poly(GDASH, "cl gdash")}
      ${poly(WDOT, "cl wdot")}
      ${poly(YTHIN, "cl yth")}
      ${poly(YTHICK, "cl ytk")}
      ${poly(RED, "cl red")}
      ${poly(CTHIN, "cl cth")}
      ${poly(CTHICK, "cl ctk")}

      <text x="7" y="97" font-family="Liberation Sans" font-weight="700" font-size="12" fill="#fff" textLength="62">Nifty Gann</text>
      ${["Buy27305", "T1 27387", "T2 27442", "T3 27553", "T4 27663", "T5 27719", "T6 27886"].map((t, i) => svg`<text class="hd" fill="#00ffff" x=${i ? 25 + i * 80 : 6} y="119">${t}</text>`)}
      ${["Sell27140", "T1 27057", "T2 27003", "T3 26893", "T4 26784", "T5 26729", "T6 26566"].map((t, i) => svg`<text class="hd" fill="#ffff00" x=${i ? 25 + i * 80 : 6} y="139">${t}</text>`)}
      <text x="5" y="152" font-family="Liberation Sans" font-size="8" fill="#e8e8e8">Pivot 27222</text>

      ${poly(BLUE, "cl blue")}
      ${poly(WHITE, "cl white")}
      ${candles}

      <text class="lvl" x="966" y="85">T6</text><text class="lvl" x="966" y="170">T5</text><text class="lvl" x="966" y="198">T4</text>
      <text class="lvl" x="966" y="254">T3</text><text class="lvl" x="966" y="311">T2</text><text class="lvl" x="966" y="339">T1</text>
      <text class="lvl" x="963" y="382">Bu</text><text class="lvl" x="960" y="424">Pivot</text><text class="lvl" x="963" y="465">Sell</text>

      <g fill="none" stroke="#000" stroke-width="5">
        <rect x="423.500" y="280.500" width="46" height="104"></rect>
        <rect x="758.500" y="189.500" width="68" height="111"></rect>
        <rect x="1055.500" y="337.500" width="42" height="127"></rect>
      </g>
      <g shape-rendering="auto">
        ${RD.map(([x, y]) => svg`<polygon points=${ARROW} transform="translate(${x} ${y}) rotate(180)" fill="#ee1c25"></polygon>`)}
        ${GU.map(([x, y]) => svg`<polygon points=${ARROW} transform="translate(${x} ${y})" fill="#00f000"></polygon>`)}
        <polygon points=${ARROW} transform="translate(445 352) scale(1.150)" fill="#0c0c14"></polygon>
        <polygon points=${ARROW} transform="translate(804 268) rotate(180) scale(1.150)" fill="#0c0c0c"></polygon>
        <polygon points=${ARROW} transform="translate(1079 402) rotate(15) scale(1.150)" fill="#0c0c14"></polygon>
      </g>

      <text class="ax" x="148" y="514">a 22.9 0.0 0.0 0.0 -22.9</text>
      ${osc}
      <text class="ax" x="1327" y="511">110.8</text><text class="ax" x="1327" y="515">0.00</text><text class="ax" x="1327" y="515">-99.0</text>

      <text class="ax" x="148" y="533">4) 143.8180 143.8180</text>
      ${bars}
      <path stroke="#dcdcdc" stroke-dasharray="5 3" d="M148 569.500H1323M148 588.500H1323"></path>
      ${this.oscLines()}

      <text class="ax" x="148" y="663">3 emaSdo_Bars_for 3 tm (26) 0.5 SBC mimic 3.93 2272 0.0 -2.1</text>
      ${low}
      ${this.lowLines()}

      ${PRICES.map(([t, y]) => svg`<text class="ax" x="1329" y=${y + 4}>${t}</text>`)}
      <rect x="1325" y="258" width="33" height="14" fill="#34504f"></rect>
      <text class="ax axl" x="1329" y="268.500">27512</text>
      <text class="ax" x="1327" y="531">0.6741</text><text class="ax" x="1327" y="573">55</text><text class="ax" x="1327" y="590">0.00</text><text class="ax" x="1327" y="592">-55</text><text class="ax" x="1327" y="649">-0.6759</text>
      <text class="ax" x="1327" y="661">3.1</text><text class="ax" x="1327" y="667">0.0</text><text class="ax" x="1327" y="667">-0.0</text>
      ${TIMES.map((t, i) => svg`<text class="ax" x=${4 + 64 * i} y="685">${t}</text>`)}
    </svg>`;
  }

  private oscLines() {
    const gray = [
      z10([183, 146, 195, 260]), z10([270, 262, 280, 235, 295, 250, 315, 230]), z10([380, 205, 385, 225]), z10([535, 205, 545, 240]), z10([580, 300, 595, 245, 615, 230, 628, 260]), z10([690, 280, 710, 255, 735, 245, 748, 210, 775, 210]), z10([812, 210, 835, 235, 845, 255, 860, 210]), z10([1012, 205, 1030, 245]),
      z11([65, 205, 85, 240, 90, 260]), z11([135, 290, 150, 260, 175, 215]), z11([295, 210, 315, 245, 330, 232, 340, 245]), z11([400, 275, 415, 210]), z11([460, 262, 490, 262]), z11([555, 270, 570, 245, 590, 240, 605, 210]), z11([892, 280, 905, 230, 915, 215]), z11([1000, 200, 1015, 240, 1035, 255]), z11([1095, 285, 1105, 220]), z11([1155, 190, 1170, 215]),
      z6([40, 230, 70, 285]), z6([135, 310, 150, 240]), z6([195, 222, 210, 245, 240, 260, 265, 280]), z6([540, 292, 555, 235]), z6([612, 230, 650, 280, 660, 285]), z6([960, 295, 985, 255, 995, 235]),
    ];
    const yellow = [
      z10([24, 275, 50, 270, 62, 255, 75, 275, 100, 265, 120, 305, 135, 300, 150, 262]), z10([195, 258, 207, 325, 220, 310, 232, 270, 245, 270, 258, 288, 270, 262]), z10([385, 225, 400, 265, 420, 272, 440, 285, 458, 295, 472, 298]), z10([545, 240, 555, 298, 580, 300]), z10([628, 260, 645, 295, 665, 328, 690, 280]), z10([1035, 245, 1060, 320, 1072, 340, 1090, 305, 1110, 305, 1125, 325, 1145, 315]),
      z11([90, 260, 100, 270, 120, 268, 135, 290]), z11([340, 245, 362, 380, 400, 275]), z11([445, 215, 460, 262]), z11([490, 262, 505, 310, 530, 312, 555, 270]), z11([678, 205, 688, 290, 705, 268, 715, 268, 740, 325, 755, 325, 780, 305, 795, 305, 820, 270, 860, 290, 875, 303, 892, 280]), z11([1035, 255, 1060, 345, 1075, 335, 1095, 285]),
      z6([70, 285, 98, 372, 110, 365, 135, 310]), z6([265, 280, 285, 305, 310, 290, 345, 292]), z6([385, 270, 398, 465, 405, 315, 420, 340, 445, 382, 480, 305]), z6([490, 292, 505, 305, 540, 292]), z6([865, 285, 885, 355, 910, 348, 920, 310, 945, 320, 960, 295]),
    ];
    const cyan = [
      z10([150, 262, 168, 148, 183, 146]), z10([315, 225, 330, 200, 350, 168, 365, 180, 380, 205]), z10([475, 260, 482, 160, 508, 153, 520, 180, 535, 205]), z10([775, 210, 790, 190, 800, 188, 812, 210]), z10([860, 210, 865, 115, 880, 115, 895, 145, 925, 158, 945, 182, 975, 205, 1000, 200, 1012, 205]), z10([1145, 315, 1155, 180, 1195, 185]),
      z11([15, 180, 50, 185, 65, 205]), z11([175, 215, 205, 170, 235, 190, 260, 198, 280, 195, 295, 210]), z11([415, 210, 435, 185]), z11([605, 210, 620, 165, 640, 175, 665, 175, 678, 205]), z11([915, 215, 930, 187, 950, 182, 965, 195, 985, 170, 1000, 200]), z11([1105, 220, 1120, 165, 1135, 170, 1155, 190]),
      z6([0, 225, 25, 198, 40, 230]), z6([150, 240, 155, 200, 170, 197, 195, 222]), z6([345, 292, 360, 232, 373, 222, 385, 270]), z6([555, 235, 563, 225, 580, 240, 598, 195, 612, 230]), z6([660, 285, 680, 260, 695, 140, 708, 112, 730, 160, 750, 200, 768, 230, 790, 235, 815, 225, 835, 232, 860, 280]), z6([995, 235, 1018, 190]),
    ];
    return svg`${gray.map((p) => svg`<polyline class="cl" stroke="#6e6e6e" points=${p}></polyline>`)}${poly(yellow, "cl yth")}${poly(cyan, "cl cth")}`;
  }

  private lowLines() {
    const z10b = z10([150, 494, 170, 482, 190, 490, 210, 505, 260, 500, 320, 490, 360, 490, 390, 495, 440, 497, 478, 490]);
    const z5b = z5([0, 40, 30, 35, 70, 50, 100, 42, 180, 60, 220, 45, 250, 38, 320, 30, 360, 42, 375, 25, 430, 18, 500, 27, 540, 30, 600, 48, 630, 50, 670, 35, 700, 30, 720, 42, 770, 42, 810, 20, 880, 18, 950, 35, 1000, 55, 1040, 40, 1060, 22, 1120, 50, 1200, 45, 1240, 30, 1280, 28, 1305, 45, 1460, 52, 1500, 42, 1566, 38]);
    const z6b = z6([0, 520, 60, 525, 90, 540, 130, 538, 150, 510, 220, 510, 230, 517, 385, 517, 395, 538, 440, 535, 470, 545, 545, 530, 570, 515, 640, 520, 690, 515, 710, 495, 760, 495, 780, 503, 840, 503, 870, 525, 950, 525, 1000, 505, 1018, 503]);
    return svg`
      <g fill="#ffff00">
        <polygon points=${z5([510, 40, 540, 60, 610, 48, 580, 42])}></polygon>
        <polygon points=${z5([910, 40, 960, 52, 1010, 48, 970, 42])}></polygon>
        <polygon points=${z6([830, 520, 870, 540, 950, 526, 880, 522])}></polygon>
        <polygon points=${z6([225, 520, 280, 536, 330, 525])}></polygon>
        <polygon points=${z10([0, 500, 60, 508, 120, 500])}></polygon>
      </g>
      <g fill="#00ffff">
        <polygon points=${z5([1170, 37, 1230, 22, 1270, 40, 1215, 38])}></polygon>
        <polygon points=${z5([1490, 35, 1530, 22, 1566, 30, 1540, 36])}></polygon>
        <polygon points=${z6([710, 515, 760, 500, 830, 516])}></polygon>
      </g>
      <path stroke="#e8e8e8" stroke-dasharray="5 3" d="M148 664.500H1323"></path>
      <polyline class="cl" stroke="#fff" stroke-dasharray="4 2" points=${z5([0, 30, 250, 30, 370, 15, 480, 20, 640, 25, 800, 18, 1000, 28, 1200, 28, 1440, 30, 1566, 25])}></polyline>
      <polyline class="cl" stroke="#fff" stroke-dasharray="4 2" points=${z5([30, 60, 350, 60, 370, 48, 800, 55, 1050, 50, 1300, 62, 1566, 58])}></polyline>
      <polyline class="cl" stroke="#fff" stroke-dasharray="4 2" points=${z6([0, 512, 380, 512, 640, 540, 700, 505, 920, 495, 1018, 510])}></polyline>
      <polyline class="cl" stroke="#fff" stroke-dasharray="4 2" points=${z6([0, 530, 380, 530, 460, 544, 640, 540, 720, 520, 950, 528, 1018, 528])}></polyline>
      <polyline class="cl" stroke="#000" stroke-width="2.4" points=${z10b}></polyline>
      <polyline class="cl" stroke="#000" stroke-width="2.4" points=${z5b}></polyline>
      <polyline class="cl" stroke="#000" stroke-width="2.4" points=${z6b}></polyline>`;
  }

  private toolbar() {
    const b = (k: string, extra = "") => html`<div class="b ${extra}">${IC[k]}</div>`;
    const bd = (k: string, extra = "") => html`<div class="bd ${extra}">${IC[k]}<span class="car"></span></div>`;
    const tf = (t: string, extra = "") => html`<div class="b tf ${extra}">${t}</div>`;
    return html`<div class="toolbar">
      <span class="grip m2"></span>
      ${bd("newChart", "m2")}${bd("profile")}
      <span class="sep m1"></span>
      ${b("market", "m2")}${b("target")}${b("folder")}${b("nav")}
      <span class="sep m3"></span>
      <div class="order m3">${IC.order}<span>Nuovo ordine</span></div>
      ${b("gold")}
      <span class="sep"></span>
      <span class="grip ga"></span>
      ${b("bars")}${b("candle", "active")}${b("line")}
      <span class="sep m2"></span>
      ${b("zin", "m2")}${b("zout")}
      <span class="sep m3"></span>
      ${b("scroll", "m4")}${b("shift", "active")}
      <span class="sep m2"></span>
      ${bd("tmpl", "m3")}${bd("indi")}
      <span class="sep"></span>
      <span class="grip gb"></span>
      ${b("cursor", "active")}${b("cross")}
      <span class="sep m3"></span>
      ${b("vline", "m4")}${b("hline")}${b("tline")}${b("chan")}${b("fib")}${b("txt")}${b("label")}${b("fan")}${b("ell")}${b("rect")}${b("hatch")}
      ${bd("arrows", "n37")}
      <span class="sep"></span>
      <span class="grip gc"></span>
      ${tf("M5")}${tf("M15", "active")}${tf("M30")}${tf("H1")}${tf("H4")}${tf("D1")}${tf("W1")}${tf("MN")}
      <span class="sep"></span>
      ${b("search", "m7")}
      <div class="b"><svg width="22" height="20"><path d="M3 11a6 5 0 1 1 6 5l-4 3 1-4a6 5 0 0 1-3-4z" fill="#eaeaea" stroke="#b0b0b0"/></svg><span class="badge">1</span></div>
    </div>`;
  }

  render() {
    const tabs: [string, string][] = [["IT40Cash,H4", "w89"], ["IT40Cash,M15", "w96"], ["IT40Cash,M15", "act"], ["IT40Cash,Daily", "w100"], ["IT40Cash,H4", ""], ["IT40Cash,H1", ""], ["IT40Cash,H4", ""], ["IT40Cash,H4", ""], ["IT40Cash,H4", ""], ["IT40Cash,H4", ""], ["IT40Cash,H4", ""], ["IT40Cash,H1", ""], ["IT40Cash,H1", ""], ["IT40Cash,Daily", "w99"], ["IT40Cash,H4", ""]];
    return html`
      <div class="title">
        <div class="logo">X<b>M</b></div>
        <div class="ttext">79044576: XM.COM-Demo 2 - Conto dimostrativo (demo) - Trading Point Of Financial Instruments Ltd - [IT40Cash,M15]</div>
        <div class="wbtn"><svg width="12" height="12"><path d="M1 6.500h10" stroke="#fff"/></svg></div>
        <div class="wbtn"><svg width="12" height="12"><path d="M3.500 2.500V.5h8v8h-2M.5 2.500h8.500v9H.5z" fill="none" stroke="#fff"/></svg></div>
        <div class="wbtn"><svg width="12" height="12"><path d="M1 1l10 10M11 1L1 11" stroke="#fff"/></svg></div>
      </div>
      <div class="menu">
        <div class="micon"><svg width="16" height="16"><rect x=".5" y="1.500" width="12" height="9" fill="#d7e4f5" stroke="#5b8bc7"/><rect x="3.500" y="4.500" width="12" height="10" fill="#eaf1fa" stroke="#5b8bc7"/><path d="M6 11l2-3 2 2 3-3" fill="none" stroke="#777"/></svg></div>
        ${["File", "Visualizza", "Inserisci", "Grafici", "Strumenti", "Finestra", "Aiuto"].map((m) => html`<div class="mi">${m}</div>`)}
        <div class="grow"></div>
        <div class="mdi"><svg width="9" height="9"><path d="M1 7.500h7" stroke="#555" stroke-width="2"/></svg></div>
        <div class="mdi"><svg width="11" height="11"><path d="M3.500 3V1.500h6v4H8M1.500 4h6v5h-6z" fill="none" stroke="#555" stroke-width="1.300"/></svg></div>
        <div class="mdi"><svg width="10" height="10"><path d="M1.500 1.500l7 7M8.500 1.500l-7 7" stroke="#555" stroke-width="2"/></svg></div>
      </div>
      ${this.toolbar()}
      <div class="chart">
        ${this.chart()}
        <div class="dialog">
          <div class="dtitle"><span class="dq">?</span><span class="dx"><svg width="11" height="11"><path d="M.5.5l10 10M10.500.5l-10 10" stroke="#777"/></svg></span></div>
          <div class="dscroll">
            <svg width="9" height="6"><path d="M1 5l3.500-4L8 5" fill="none" stroke="#c4c4c4" stroke-width="2"/></svg>
            <svg width="9" height="6"><path d="M1 1l3.500 4L8 1" fill="none" stroke="#c4c4c4" stroke-width="2"/></svg>
          </div>
          <div class="tbl">
            <div class="rows">
              <div class="row g">15</div>
              <div class="row">Trend signal up</div>
              <div class="row g">Didi_index trend channel</div>
              <div class="row">15</div>
              <div class="row g"></div>
            </div>
            <div class="vsb">
              <svg width="9" height="6"><path d="M1 5l3.500-4L8 5" fill="none" stroke="#333" stroke-width="2"/></svg>
              <span class="thumb"></span>
              <svg width="9" height="6"><path d="M1 1l3.500 4L8 1" fill="none" stroke="#333" stroke-width="2"/></svg>
            </div>
          </div>
        </div>
      </div>
      <div class="tabs">
        <div class="strip">${tabs.map(([t, c]) => html`<div class="tab ${c === "act" ? "act" : "sp " + c}">${t}</div>`)}</div>
        <div class="tarrow"><span class="off">◀</span><span>▶</span></div>
      </div>
      <div class="status">
        <div class="st s1">Per aiuto, premi F1</div>
        <div class="st s2">Default</div>
        <div class="st s3"></div><div class="st s4"></div><div class="st s5"></div><div class="st s6"></div><div class="st s7"></div><div class="st s8"></div>
        <div class="kb">
          <svg width="24" height="13"><g fill="#6b7f00">${[0, 3, 6].map((x, i) => svg`<rect x=${x} y=${[3, 0, 3][i]} width="2" height=${[5, 8, 5][i]}></rect>`)}</g><g fill="#16495e">${[0, 3, 6, 9, 12, 15, 18, 21].map((x, i) => svg`<rect x=${x} y=${[8, 8, 7, 6, 5, 4, 2, 1][i]} width="2" height=${13 - [8, 8, 7, 6, 5, 4, 2, 1][i]}></rect>`)}</g></svg>
          <span>11308/2 kb</span>
        </div>
      </div>
    `;
  }
}
